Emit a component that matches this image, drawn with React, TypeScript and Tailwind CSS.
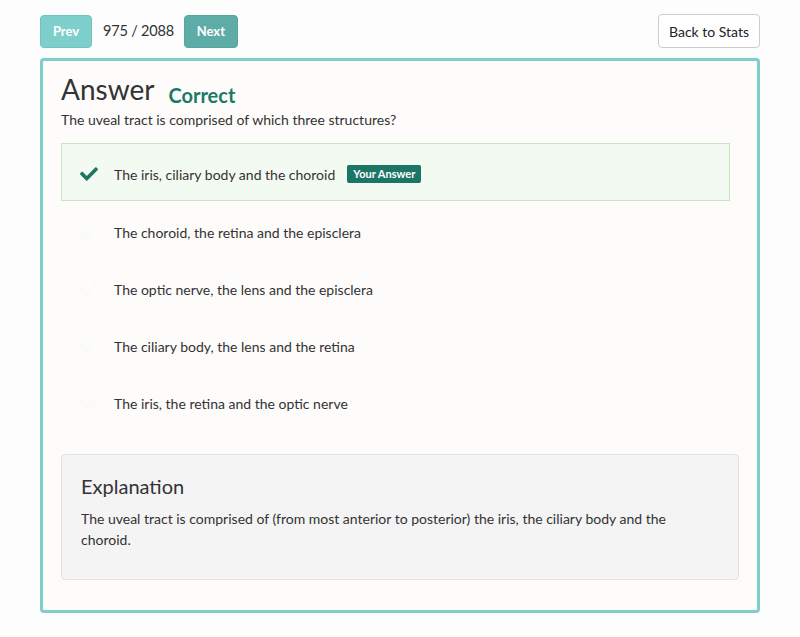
import React from "react";
import { FaCheck } from "react-icons/fa";

const options = [
  "The choroid, the retina and the episclera",
  "The optic nerve, the lens and the episclera",
  "The ciliary body, the lens and the retina",
  "The iris, the retina and the optic nerve",
];

export default function App() {
  return (
    <div className="min-h-[637px] w-[800px] bg-[#fdfdfd] text-[#333] font-['Lato',sans-serif]">
      <div className="flex items-center justify-between px-[40px] pt-[14px]">
        <div className="flex items-center">
          <button className="h-[33px] w-[52px] rounded-[4px] bg-[#7ecfcb] border border-[#72c3bf] pt-[1px] text-[13px] font-bold text-white">
            Prev
          </button>
          <span className="ml-[11px] text-[14.5px] tracking-[-0.2px] text-[#333]">975 / 2088</span>
          <button className="ml-[10px] h-[33px] w-[54px] rounded-[4px] bg-[#5eaca8] border border-[#58a49f] pt-[1px] text-[13px] font-bold text-white">
            Next
          </button>
        </div>
        <button className="h-[34px] w-[102px] rounded-[4px] border border-[#cccccc] bg-white text-[14px] text-[#222]">
          Back to Stats
        </button>
      </div>

      <div className="mx-[40px] mt-[10px] h-[555px] rounded-[4px] border-[3px] border-[#7ecfcb] bg-[#fdfcfb] px-[18px] pt-[11px]">
        <div className="flex items-end">
          <h1 className="text-[28px] leading-[35px] text-[#333]">Answer</h1>
          <span className="ml-[14px] mb-[-2px] text-[20px] font-bold leading-[28px] text-[#1a7a66]">Correct</span>
        </div>
        <p className="mt-[3px] text-[14px] leading-[20px] text-[#333]">
          The uveal tract is comprised of which three structures?
        </p>

        <div className="mt-[13px] mr-[9px]">
          <div className="flex h-[58px] items-center border border-[#c9e5c4] bg-[#f3faf1] pl-[16px] pt-[4px]">
            <FaCheck className="h-[18px] w-[22px] text-[#1c7565]" />
            <span className="ml-[14px] text-[14px] text-[#333]">The iris, ciliary body and the choroid</span>
            <span className="ml-[12px] rounded-[2px] bg-[#1c7565] px-[6px] py-[2px] text-[11px] font-bold leading-[14px] text-white">
              Your Answer
            </span>
          </div>
          {options.map((o) => (
            <div key={o} className="flex h-[57px] items-center pl-[17px] pt-[5px]">
              <FaCheck className="h-[18px] w-[22px] text-[#fafaf9]" />
              <span className="ml-[14px] text-[14px] text-[#333]">{o}</span>
            </div>
          ))}
        </div>

        <div className="mt-[25px] h-[126px] rounded-[4px] border border-[#e2e2e2] bg-[#f4f4f4] px-[19px] pt-[17px]">
          <h2 className="text-[20px] leading-[28px] text-[#333]">Explanation</h2>
          <p className="mt-[8px] text-[14px] leading-[21px] text-[#333]">
            The uveal tract is comprised of (from most anterior to posterior) the iris, the ciliary body and the choroid.
          </p>
        </div>
      </div>
    </div>
  );
}
